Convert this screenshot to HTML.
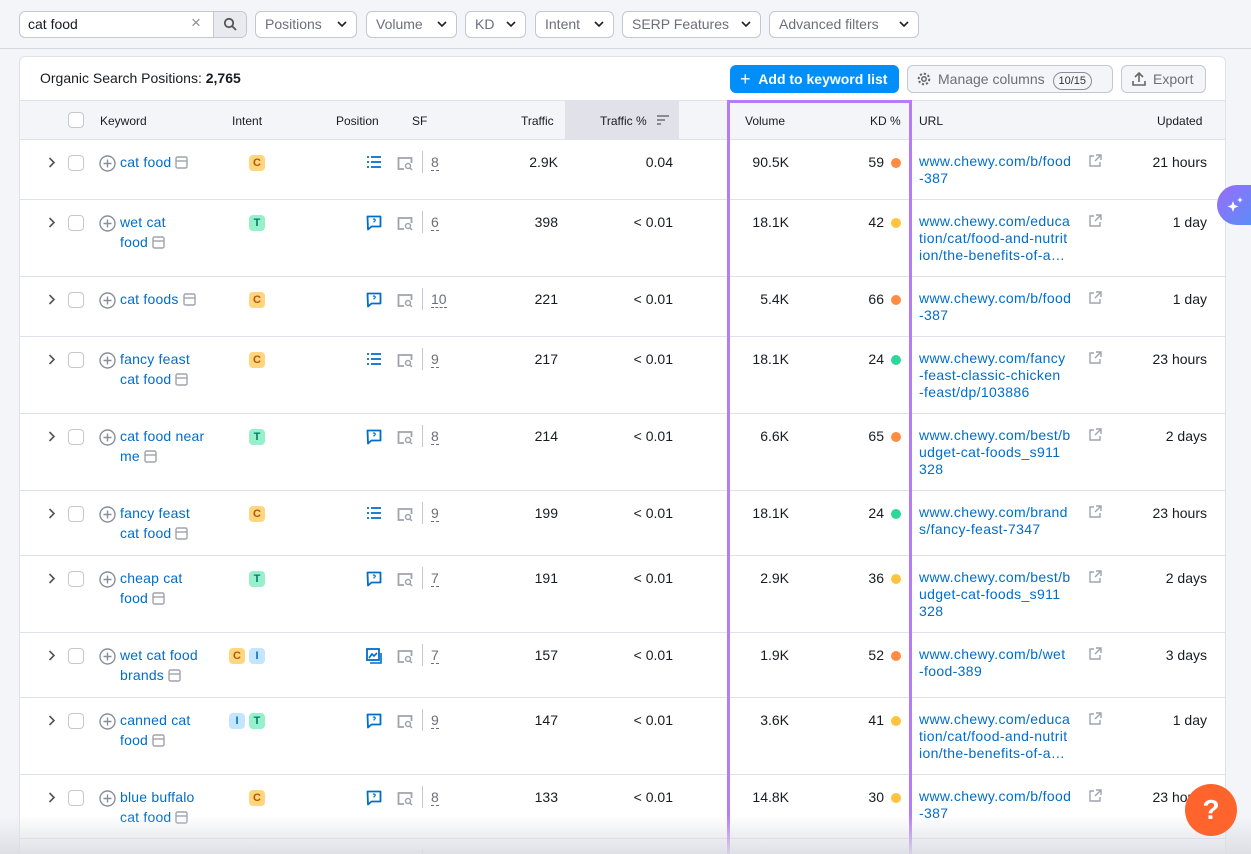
<!DOCTYPE html>
<html style="overflow:hidden;width:1251px;height:854px"><head><meta charset="utf-8"><style>
*{box-sizing:border-box;margin:0;padding:0}
body{width:1251px;height:854px;overflow:hidden;background:#f4f5f9;font-family:"Liberation Sans",Arial,sans-serif;font-size:14px;color:#191b23;position:relative}
.a{position:absolute}
.btn{position:absolute;top:11px;height:27px;border:1px solid #c4c7cf;border-radius:6px;background:#fff;color:#6c6e79;font-size:14px;line-height:25px;padding-left:9px}
.btn svg{position:absolute;right:9px;top:9px}
.card{position:absolute;left:19px;top:56px;width:1207px;height:798px;background:#fff;border:1px solid #e0e1e9;border-bottom:none;border-radius:6px 6px 0 0;overflow:hidden}
.hdr{position:absolute;left:0;top:43px;width:1207px;height:40px;background:#f4f5f9;border-top:1px solid #e0e1e9;border-bottom:1px solid #e0e1e9;font-size:12px}
.hdr span{position:absolute;top:13px}
.row{position:absolute;left:0;width:1207px;border-bottom:1px solid #e0e1e9}
.row>*{position:absolute}
.kw{left:100px;width:115px;color:#006dca;line-height:20px;top:12px;letter-spacing:.2px}
.cb{left:48px;top:15px;width:16px;height:16px;border:1px solid #c4c7cf;border-radius:4px}
.chev{left:28px;top:17px}
.plus{left:79px;top:15px}
.bd{top:15px;width:16px;height:16px;border-radius:4px;font-size:11px;font-weight:bold;text-align:center;line-height:16px}
.C{background:#ffd57e;color:#b0570b}.T{background:#97f0cc;color:#007c65}.I{background:#c4e5fe;color:#006dca}
.pi{left:346px;top:15px}
.sfi{left:377px;top:16px}
.dv{left:402px;top:11px;width:1px;height:22px;background:#c4c7cf}
.sfn{left:411px;top:12px;color:#6c6e79;line-height:20px;border-bottom:1px dashed #6c6e79;height:19px}
.tr{right:669px;top:12px;line-height:20px;text-align:right}
.tp{right:554px;top:12px;line-height:20px}
.vo{right:438px;top:12px;line-height:20px}
.kd{right:343px;top:12px;line-height:20px}
.dot{left:871px;top:18px;width:10px;height:10px;border-radius:50%}
.o{background:#ff8c43}.y{background:#ffc43d}.g{background:#2bd899}
.url{left:899px;top:13px;width:170px;color:#006dca;line-height:17px;white-space:nowrap;letter-spacing:.35px}
.ext{left:1068px;top:14px}
.up{right:20px;top:12px;line-height:20px}
.mini{display:inline-block;vertical-align:-2px;margin-left:4px}
</style></head><body>
<div class="a" style="left:0;top:48px;width:1251px;height:1px;background:#d5d7de"></div>
<div class="a" style="left:19px;top:11px;width:228px;height:27px;border:1px solid #c4c7cf;border-radius:6px;background:#fff"></div>
<div class="a" style="left:28px;top:16px;font-size:14px">cat food</div>
<div class="a" style="left:191px;top:13px;color:#8b8e99;font-size:17px">×</div>
<div class="a" style="left:213px;top:12px;width:33px;height:25px;background:#e9eaf0;border-left:1px solid #c4c7cf;border-radius:0 5px 5px 0"><svg width="14" height="14" style="position:absolute;left:9px;top:5px" viewBox="0 0 14 14"><circle cx="6" cy="6" r="4.2" stroke="#555" stroke-width="1.8" fill="none"/><path d="M9 9l4 4" stroke="#555" stroke-width="1.8"/></svg></div>
<div class="btn" style="left:255px;width:102px">Positions<svg width="10" height="7"><path d="M1 1l4 4 4-4" stroke="#222" stroke-width="1.6" fill="none"/></svg></div>
<div class="btn" style="left:366px;width:91px">Volume<svg width="10" height="7"><path d="M1 1l4 4 4-4" stroke="#222" stroke-width="1.6" fill="none"/></svg></div>
<div class="btn" style="left:465px;width:61px">KD<svg width="10" height="7"><path d="M1 1l4 4 4-4" stroke="#222" stroke-width="1.6" fill="none"/></svg></div>
<div class="btn" style="left:535px;width:79px">Intent<svg width="10" height="7"><path d="M1 1l4 4 4-4" stroke="#222" stroke-width="1.6" fill="none"/></svg></div>
<div class="btn" style="left:622px;width:139px">SERP Features<svg width="10" height="7"><path d="M1 1l4 4 4-4" stroke="#222" stroke-width="1.6" fill="none"/></svg></div>
<div class="btn" style="left:769px;width:150px">Advanced filters<svg width="10" height="7"><path d="M1 1l4 4 4-4" stroke="#222" stroke-width="1.6" fill="none"/></svg></div>

<div class="card">
<div class="a" style="left:20px;top:13px;font-size:14px">Organic Search Positions: <b>2,765</b></div>
<div class="a" style="left:710px;top:8px;width:169px;height:28px;background:#008ff8;border-radius:6px;color:#fff;font-weight:bold;line-height:28px;padding-left:10px"><span style="font-size:18px;font-weight:normal;vertical-align:-1px">+</span>&nbsp;&nbsp;Add to keyword list</div>
<div class="a" style="left:887px;top:8px;width:206px;height:28px;border:1px solid #c4c7cf;border-radius:6px;background:#f4f5f9;color:#6c6e79;line-height:26px;padding-left:30px">Manage columns <span style="display:inline-block;border:1px solid #8b8e99;border-radius:10px;font-size:11px;line-height:16px;padding:0 5px;color:#333;margin-left:4px">10/15</span>
<svg width="16" height="16" viewBox="0 0 16 16" style="position:absolute;left:8px;top:5px"><circle cx="8" cy="8" r="5.3" fill="none" stroke="#666" stroke-width="2" stroke-dasharray="2.2 1.9"/><circle cx="8" cy="8" r="2.2" fill="none" stroke="#666" stroke-width="1.5"/></svg></div>
<div class="a" style="left:1101px;top:8px;width:85px;height:28px;border:1px solid #c4c7cf;border-radius:6px;background:#f4f5f9;color:#6c6e79;line-height:26px;padding-left:31px">Export<svg width="16" height="16" viewBox="0 0 16 16" style="position:absolute;left:9px;top:5px"><path d="M8 11V2M4 6l4-4 4 4M2 10v4h12v-4" stroke="#666" stroke-width="1.6" fill="none"/></svg></div>

<div class="hdr">
<div class="a" style="left:48px;top:11px;width:16px;height:16px;border:1px solid #c4c7cf;border-radius:4px;background:#fff"></div>
<span style="left:80px">Keyword</span><span style="left:212px">Intent</span><span style="left:316px">Position</span><span style="left:392px">SF</span><span style="left:501px">Traffic</span>
<div class="a" style="left:545px;top:0;width:114px;height:39px;background:#e0e1e9"></div>
<span style="left:580px">Traffic %</span>
<svg class="a" style="left:637px;top:14px" width="12" height="10"><path d="M0 1h12M0 5h8M0 9h4" stroke="#6c6e79" stroke-width="1.5"/></svg>
<span style="left:725px">Volume</span><span style="left:850px">KD %</span><span style="left:899px">URL</span><span style="left:1137px">Updated</span>
</div>

<div id="rows"></div>
</div>

<div class="a" style="left:727px;top:100px;width:185px;height:754px;border:3px solid #b57cf5;border-bottom:none"></div>
<div class="a" style="left:0;top:815px;width:1251px;height:39px;background:linear-gradient(rgba(230,231,236,0),rgba(220,221,228,.9))"></div>
<div class="a" style="left:1217px;top:185px;width:34px;height:40px;border-radius:20px 0 0 20px;background:linear-gradient(135deg,#9a6cf8,#5b8cf8)"><svg width="20" height="20" viewBox="0 0 20 20" style="position:absolute;left:9px;top:10px"><path d="M7 6l1.5 4 4 1.5-4 1.5L7 17l-1.5-4-4-1.5 4-1.5zM14 2l.8 2.2 2.2.8-2.2.8L14 8l-.8-2.2L11 5l2.2-.8z" fill="#fff"/></svg></div>
<div class="a" style="left:1185px;top:784px;width:52px;height:52px;border-radius:50%;background:#ff642d;color:#fff;font-size:28px;font-weight:bold;text-align:center;line-height:52px">?</div>

<script>
const rows=[
[83,60,"cat food",["C"],"list","8","2.9K","0.04","90.5K","59","o","www.chewy.com/b/food<br>-387","21 hours"],
[143,77,"wet cat<br>food",["T"],"q","6","398","< 0.01","18.1K","42","y","www.chewy.com/educa<br>tion/cat/food-and-nutrit<br>ion/the-benefits-of-a…","1 day"],
[220,60,"cat foods",["C"],"q","10","221","< 0.01","5.4K","66","o","www.chewy.com/b/food<br>-387","1 day"],
[280,77,"fancy feast<br>cat food",["C"],"list","9","217","< 0.01","18.1K","24","g","www.chewy.com/fancy<br>-feast-classic-chicken<br>-feast/dp/103886","23 hours"],
[357,77,"cat food near<br>me",["T"],"q","8","214","< 0.01","6.6K","65","o","www.chewy.com/best/b<br>udget-cat-foods_s911<br>328","2 days"],
[434,65,"fancy feast<br>cat food",["C"],"list","9","199","< 0.01","18.1K","24","g","www.chewy.com/brand<br>s/fancy-feast-7347","23 hours"],
[499,77,"cheap cat<br>food",["T"],"q","7","191","< 0.01","2.9K","36","y","www.chewy.com/best/b<br>udget-cat-foods_s911<br>328","2 days"],
[576,65,"wet cat food<br>brands",["C","I"],"img","7","157","< 0.01","1.9K","52","o","www.chewy.com/b/wet<br>-food-389","3 days"],
[641,77,"canned cat<br>food",["I","T"],"q","9","147","< 0.01","3.6K","41","y","www.chewy.com/educa<br>tion/cat/food-and-nutrit<br>ion/the-benefits-of-a…","1 day"],
[718,64,"blue buffalo<br>cat food",["C"],"q","8","133","< 0.01","14.8K","30","y","www.chewy.com/b/food<br>-387","23 hours"],
[782,60,"",["C"],"q","","","","","","","",""]
];
const mini='<svg class="mini" width="13" height="13" viewBox="0 0 13 13"><rect x="1" y="1" width="11" height="11" rx="1.5" fill="none" stroke="#a0a3ad" stroke-width="1.4"/><path d="M1 5h11" stroke="#a0a3ad" stroke-width="1.4"/></svg>';
const icons={list:'<svg width="16" height="14" viewBox="0 0 16 14"><path d="M1 2h2M1 7h2M1 12h2M5 2h10M5 7h10M5 12h10" stroke="#006dca" stroke-width="1.8"/></svg>',
q:'<svg width="16" height="16" viewBox="0 0 16 16"><path d="M1.5 1.5h13v10h-9l-3.5 3z" fill="none" stroke="#006dca" stroke-width="1.8" stroke-linejoin="round"/><path d="M7 4.5q1-1 2 0t-1 2v1" stroke="#006dca" stroke-width="1.2" fill="none"/></svg>',
img:'<svg width="16" height="16" viewBox="0 0 16 16"><rect x="1" y="1" width="12" height="11" fill="none" stroke="#006dca" stroke-width="1.8"/><path d="M3 10l3-4 2 2 3-3M4 15h11V5" stroke="#006dca" stroke-width="1.6" fill="none"/></svg>'};
let h='';
for(const r of rows){
 const [top,hh,kw,bd,pi,sf,tr,tp,vo,kd,dc,url,up]=r;
 h+=`<div class="row" style="top:${top}px;height:${hh}px">
<svg class="chev" width="8" height="11"><path d="M1.5 1l4.5 4.5-4.5 4.5" stroke="#555" stroke-width="1.6" fill="none"/></svg>
<div class="cb"></div>
<svg class="plus" width="17" height="17" viewBox="0 0 17 17"><circle cx="8.5" cy="8.5" r="7.5" fill="none" stroke="#8b8e99" stroke-width="1.4"/><path d="M8.5 4.5v8M4.5 8.5h8" stroke="#8b8e99" stroke-width="1.4"/></svg>
<div class="kw">${kw}${kw?mini:''}</div>`;
 bd.forEach((b,i)=>{const l=bd.length==2?(i?229:209):229;h+=`<div class="bd ${b}" style="left:${l}px">${b}</div>`});
 h+=`<div class="pi">${icons[pi]}</div>
<svg class="sfi" width="16" height="15" viewBox="0 0 16 15"><path d="M7 13H1.5V2h13v5" fill="none" stroke="#a0a3ad" stroke-width="1.8"/><circle cx="11" cy="10" r="2.5" fill="none" stroke="#a0a3ad" stroke-width="1.5"/><path d="M13 12l2 2" stroke="#a0a3ad" stroke-width="1.5"/></svg>
<div class="dv"></div>${sf?`<div class="sfn">${sf}</div>`:''}
<div class="tr">${tr}</div><div class="tp">${tp}</div><div class="vo">${vo}</div><div class="kd">${kd}</div>${dc?`<div class="dot ${dc}"></div>`:''}
${url?`<div class="url">${url}</div><svg class="ext" width="14" height="14" viewBox="0 0 14 14"><path d="M6 2H2v10h10V8M8 1h5v5M13 1L7 7" fill="none" stroke="#a0a3ad" stroke-width="1.4"/></svg>`:''}
<div class="up">${up}</div></div>`;
}
document.getElementById('rows').innerHTML=h;
</script>
</body></html>
